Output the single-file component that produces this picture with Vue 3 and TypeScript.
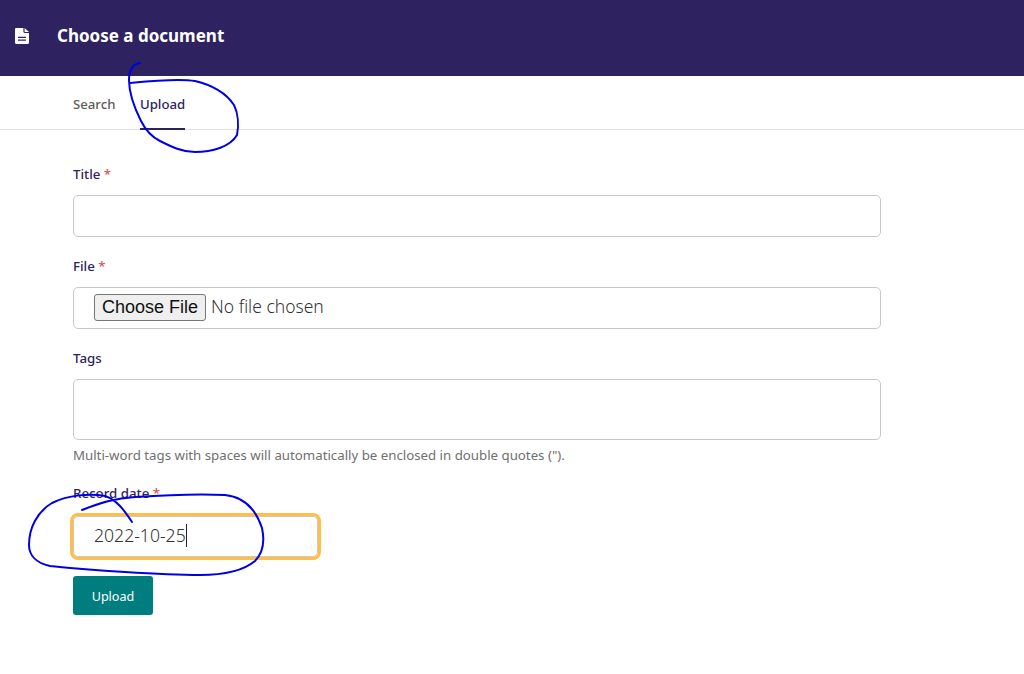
<script setup lang="ts">
const tabs: { label: string; active: boolean }[] = [
  { label: 'Search', active: false },
  { label: 'Upload', active: true },
]
</script>

<template>
  <div class="page">
    <header class="head">
      <svg class="doc" viewBox="0 0 14 16" width="14" height="16" aria-hidden="true">
        <path fill="#fff" fill-rule="evenodd" d="M1.200 0H8.400v3.800c0 .7.500 1.200 1.200 1.200H14v9.800c0 .7-.5 1.200-1.200 1.200H1.200C.5 16 0 15.500 0 14.800V1.200C0 .5.500 0 1.200 0zM3 8.800v1.300h8V8.800H3zm0 2.700v1.300h8v-1.300H3zM9.600 0 14 3.900H9.600V0z" />
      </svg>
      <h1>Choose a document</h1>
    </header>
    <nav class="tabs">
      <a v-for="t in tabs" :key="t.label" class="tab" :class="{ active: t.active }">{{ t.label }}</a>
    </nav>
    <form class="form" @submit.prevent>
      <div class="field">
        <label>Title <em>*</em></label>
        <input class="box" type="text" />
      </div>
      <div class="field">
        <label>File <em>*</em></label>
        <input class="box file" type="file" />
      </div>
      <div class="field">
        <label>Tags</label>
        <input class="box tall" type="text" />
        <p class="help">Multi-word tags with spaces will automatically be enclosed in double quotes (").</p>
      </div>
      <div class="field date">
        <label>Record date <em>*</em></label>
        <div class="box focus"><span>2022-10-25</span><i class="caret"></i></div>
      </div>
      <button class="submit" type="submit">Upload</button>
    </form>
    <svg class="ink" viewBox="0 0 1024 674" width="1024" height="674" aria-hidden="true">
      <path d="M140 63C133 64 129 70 129 80C129 92 134 107 141 121C146 131 152 137 160 141C172 147 182 152 195 152C212 152 230 147 237 135C239 125 238 113 234 105C226 93 212 85 195 81C178 78 150 81 130 83" />
      <path d="M82 510C100 503 115 498 135 497C165 495 205 494 225 495C245 497 256 510 262 528C265 542 263 553 255 561C243 571 225 575 200 575C160 575 90 570 50 566C36 563 29 555 29 545C29 528 37 512 52 503C68 495 90 493 105 496C117 500 124 510 132 522" />
    </svg>
  </div>
</template>

<style>
html, body { margin: 0; background: #fff; }
</style>

<style scoped>
.page {
  position: relative;
  width: 1024px;
  height: 674px;
  overflow: hidden;
  font-family: "Noto Sans", "Open Sans", sans-serif;
  color: #2e2360;
}
.head {
  height: 76px;
  background: #2e2360;
  display: flex;
  align-items: center;
  padding-left: 15px;
  box-sizing: border-box;
  color: #fff;
  padding-bottom: 5px;
}
.doc { flex: none; }
.head h1 {
  margin: 0 0 0 28px;
  font-size: 17px;
  font-weight: 700;
  line-height: 24px;
}
.tabs {
  height: 54px;
  box-sizing: border-box;
  border-bottom: 1px solid #e0e0e0;
  padding-left: 73px;
  display: flex;
  gap: 24.500px;
}
.tab {
  height: 54px;
  box-sizing: border-box;
  line-height: 56px;
  font-size: 13.200px;
  font-weight: 500;
  color: #5c5c5c;
}
.tab.active {
  color: #2e2360;
  border-bottom: 2px solid #2e2360;
}
.form {
  padding: 34px 0 0 73px;
  width: 808px;
}
.field { margin-bottom: 19px; }
.field label {
  display: block;
  height: 20px;
  line-height: 20px;
  font-size: 13.300px;
  font-weight: 500;
  margin-bottom: 11px;
}
.field em {
  font-style: normal;
  color: #d9534f;
}
.box {
  display: block;
  box-sizing: border-box;
  width: 808px;
  height: 42px;
  border: 1px solid #c8c8c8;
  border-radius: 5px;
  background: #fff;
  margin: 0;
  padding: 0;
}
.tall { height: 61px; }
.file {
  padding: 6px 20px;
  font-family: "Noto Sans", sans-serif;
  font-size: 17.500px;
  font-weight: 300;
  color: #333;
}
.file::file-selector-button {
  font-family: "Liberation Sans", sans-serif;
  font-size: 18px;
  font-weight: 400;
  height: 27px;
  width: 112px;
  padding: 0;
  margin-right: 5px;
  border: 1px solid #767676;
  border-radius: 3px;
  background: #efefef;
  color: #111;
}
.help {
  margin: 6px 0 0;
  height: 19px;
  line-height: 18px;
  font-size: 13.250px;
  font-weight: 400;
  color: #6f6f6f;
}
.date { margin-bottom: 19px; }
.field.date label { margin-bottom: 12px; margin-top: -1px; padding-bottom: 1px; }
.focus {
  width: 245px;
  height: 41px;
  outline: 3px solid #ffbf47;
  outline-offset: 0;
  padding: 0 0 3px 20px;
  display: flex;
  align-items: center;
  font-size: 17.600px;
  font-weight: 300;
  color: #333;
}
.caret {
  width: 1px;
  height: 23px;
  background: #222;
  margin-left: 0;
}
.submit {
  display: block;
  width: 80px;
  height: 39px;
  border: 0;
  border-radius: 3px;
  background: #007d7e;
  color: #fff;
  font-family: inherit;
  font-size: 12.600px;
  font-weight: 400;
  padding: 2px 0 0;
}
.ink {
  position: absolute;
  left: 0;
  top: 0;
  pointer-events: none;
}
.ink path {
  fill: none;
  stroke: #0000e6;
  stroke-width: 2;
  stroke-linecap: round;
  stroke-linejoin: round;
}
</style>
